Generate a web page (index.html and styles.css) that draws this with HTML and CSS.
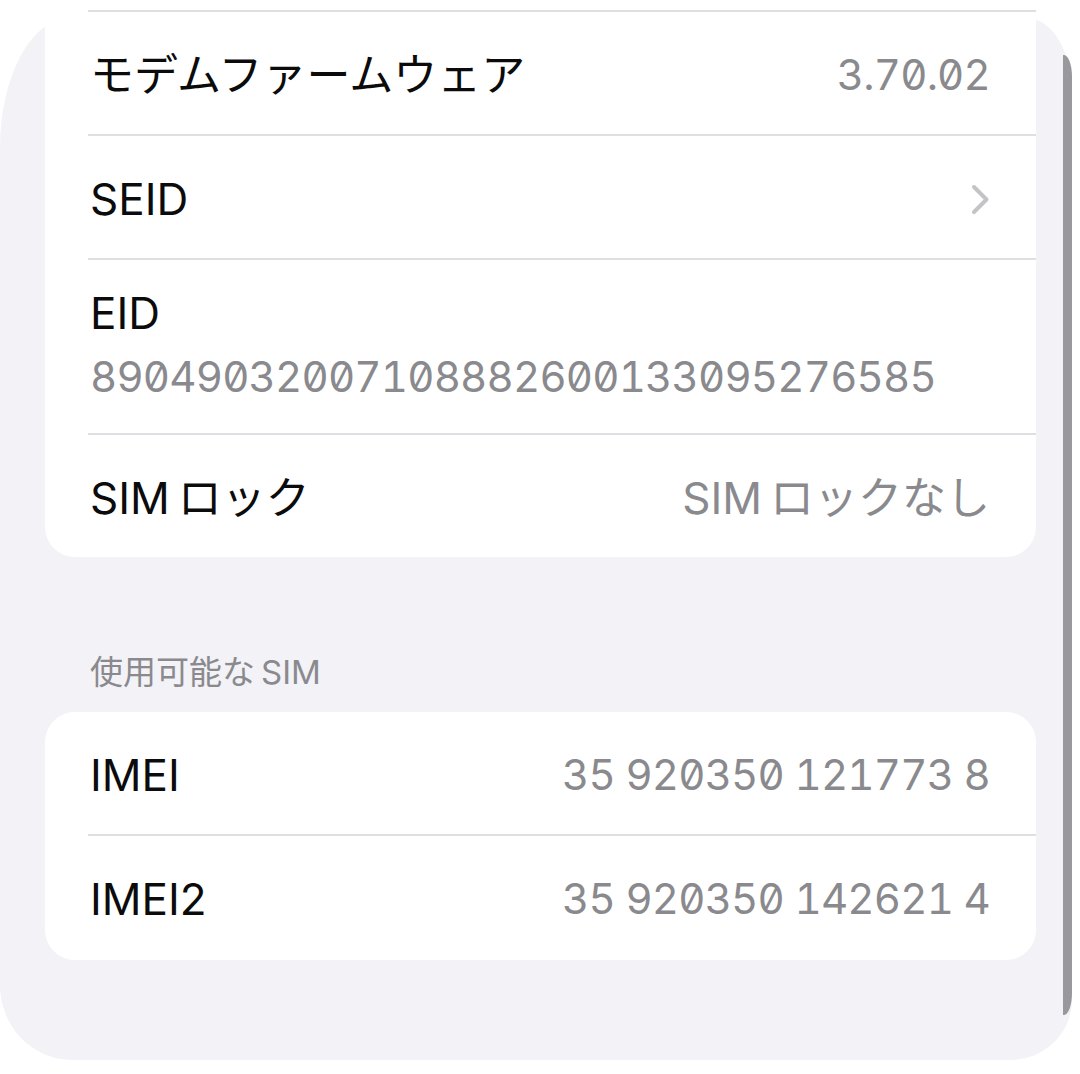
FILE: index.html
```html
<!DOCTYPE html>
<html lang="ja">
<head>
    <meta charset="UTF-8">
    <meta name="viewport" content="width=device-width, initial-scale=1.0">
    <title>情報</title>
    <link rel="stylesheet" href="styles.css">
</head>
<body>
    <div class="screen">
        <main class="content">
            <section class="group group-cut">
                <div class="row first">
                    <span class="label">モデムファームウェア</span>
                    <span class="value num">3.70.02</span>
                </div>
                <div class="row">
                    <span class="label">SEID</span>
                    <svg class="chevron" viewBox="0 0 20 33" aria-hidden="true">
                        <polyline points="4,4 16.5,16.5 4,29" />
                    </svg>
                </div>
                <div class="row stacked">
                    <span class="label">EID</span>
                    <span class="value num">89049032007108882600133095276585</span>
                </div>
                <div class="row">
                    <span class="label">SIM&#8201;ロック</span>
                    <span class="value">SIM&#8201;ロックなし</span>
                </div>
            </section>

            <h2 class="group-title">使用可能な&#8201;SIM</h2>
            <section class="group">
                <div class="row">
                    <span class="label">IMEI</span>
                    <span class="value num">35 920350 121773 8</span>
                </div>
                <div class="row">
                    <span class="label">IMEI2</span>
                    <span class="value num">35 920350 142621 4</span>
                </div>
            </section>
        </main>
        <div class="edge"></div>
    </div>
</body>
</html>
```

FILE: styles.css
```css
body {
    margin: 0;
    height: 1074px;
    overflow: hidden;
    background: #fff;
    font-family: Inter, "Noto Sans CJK JP", sans-serif;
}
.screen {
    display: flex;
    width: 1072px;
    height: 1042px;
    margin-top: 18px;
    background: #f2f2f7;
    border-radius: 70px 45px 62px 72px / 130px 75px 60px 75px;
}
.content {
    flex: 1;
    min-width: 0;
    padding: 0 27px 0 45px;
}
.group {
    background: #fff;
    border-radius: 30px;
    padding-bottom: 2px;
}
.group-cut {
    margin-top: -18px;
    padding-top: 10px;
    padding-bottom: 0;
    border-top-left-radius: 0;
    border-top-right-radius: 0;
}
.row {
    box-sizing: border-box;
    display: flex;
    align-items: center;
    justify-content: space-between;
    min-height: 124px;
    margin-left: 43px;
    padding: 5px 46px 0 2px;
    border-bottom: 2px solid #dedee3;
    line-height: 1.2;
}
.row.first {
    min-height: 126px;
    border-top: 2px solid #dedee3;
}
.row:last-child {
    min-height: 122px;
    border-bottom: none;
}
.row.stacked {
    flex-direction: column;
    align-items: flex-start;
    justify-content: flex-start;
    min-height: 175px;
    padding: 22px 46px 25px 2px;
    line-height: 63px;
}
.label {
    font-size: 44px;
    color: #0b0b0c;
}
.value {
    font-size: 44px;
    color: #8a8a8e;
}
.num {
    font-size: 42px;
    letter-spacing: -0.8px;
    font-variant-numeric: tabular-nums slashed-zero;
    font-feature-settings: "tnum" 1, "zero" 1;
}
.chevron {
    width: 20px;
    height: 33px;
    fill: none;
    stroke: #c4c4c8;
    stroke-width: 4;
    stroke-linecap: round;
    stroke-linejoin: round;
}
.group-title {
    margin: 95px 0 20px 45px;
    font-size: 33px;
    font-weight: 400;
    line-height: 40px;
    color: #8a8a8e;
}
.edge {
    width: 9px;
    margin: 37px 0 45px;
    background: #99989d;
    border-radius: 0 8px 8px 0 / 0 22px 22px 0;
}
```
